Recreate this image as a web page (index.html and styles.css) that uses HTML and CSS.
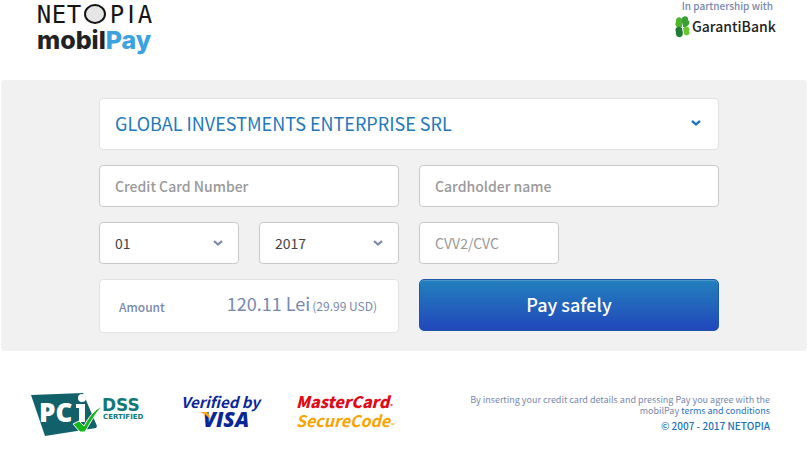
FILE: index.html
```html
<!DOCTYPE html>
<html lang="en">
<head>
<meta charset="utf-8">
<meta name="viewport" content="width=device-width, initial-scale=1">
<title>mobilPay - Pay safely</title>
<link rel="stylesheet" href="styles.css">
</head>
<body>
<header class="header">
  <svg class="brand" width="124" height="60" viewBox="0 0 124 60" role="img" aria-label="NETOPIA mobilPay">
    <ellipse cx="60" cy="14" rx="10" ry="9" fill="#e6e6e6" stroke="#151515" stroke-width="2"/>
    <g class="brand-top">
      <text x="9" y="23">N</text>
      <text x="24" y="23">E</text>
      <text x="39" y="23">T</text>
      <text x="82" y="23">P</text>
      <text class="brand-stem" x="96" y="23">I</text>
      <text x="110" y="23">A</text>
    </g>
    <text class="brand-name" x="2" y="49">mobil<tspan class="brand-pay">Pay</tspan></text>
  </svg>
  <div class="partner">
    <span class="partner-label">In partnership with</span>
    <svg width="102" height="30" viewBox="0 0 102 30" role="img" aria-label="GarantiBank">
      <path d="M8 16C3 18 0 14 2 11C1 6 8 4 8 10Z" fill="#4fb52f"/>
      <path d="M9 16C9 12 6 9 8 7C10 4 15 5 14 9C18 12 13 17 9 16Z" fill="#3aa035"/>
      <path d="M8 17C4 14 0 17 2 21C1 25 5 28 8 25C10 22 8 20 8 17Z" fill="#217a35"/>
      <path d="M9 17C13 14 17 17 15 20C17 24 12 26 10 23Z" fill="#6cc62f"/>
      <text class="bank-name" x="18" y="21">GarantiBank</text>
    </svg>
  </div>
</header>
<main class="panel">
  <form class="form" onsubmit="return false">
    <button class="merchant" type="button">
      <span>GLOBAL INVESTMENTS ENTERPRISE SRL</span>
      <svg width="12" height="8" viewBox="0 0 12 8" aria-hidden="true"><path d="M2 2L6 5.5L10 2" fill="none" stroke="#2478b9" stroke-width="2.4"/></svg>
    </button>
    <input class="field half" type="text" aria-label="Credit Card Number" placeholder="Credit Card Number">
    <input class="field half" type="text" aria-label="Cardholder name" placeholder="Cardholder name">
    <div class="select">
      <select class="field" aria-label="Expiry month"><option>01</option></select>
      <svg class="chevron" width="10" height="8" viewBox="0 0 10 8" aria-hidden="true"><path d="M1 2L5 5.5L9 2" fill="none" stroke="#7889ae" stroke-width="2.2"/></svg>
    </div>
    <div class="select">
      <select class="field" aria-label="Expiry year"><option>2017</option></select>
      <svg class="chevron" width="10" height="8" viewBox="0 0 10 8" aria-hidden="true"><path d="M1 2L5 5.5L9 2" fill="none" stroke="#7889ae" stroke-width="2.2"/></svg>
    </div>
    <input class="field code" type="text" aria-label="CVV2/CVC" placeholder="CVV2/CVC">
    <div class="amount half">
      <span class="amount-label">Amount</span>
      <span class="amount-value">120.11 Lei <small class="amount-usd">(29.99 USD)</small></span>
    </div>
    <button class="pay half" type="submit">Pay safely</button>
  </form>
</main>
<footer class="footer">
  <div class="badges">
    <svg width="116" height="46" viewBox="0 0 116 46" role="img" aria-label="PCI DSS Certified">
      <path d="M1 3L53 1L67 34L66 36L15 44Z" fill="#12616a"/>
      <text class="pci" x="9" y="30">PC</text>
      <path d="M46 12H55V30H49V16H46Z" fill="#fff"/>
      <circle cx="52" cy="6" r="4" fill="#fff"/>
      <path d="M43 32L49 29L54 34C58 26 64 18 72 14C65 22 60 31 55 40H50Z" fill="#12b81c" stroke="#fff" stroke-width="1"/>
      <text class="dss" x="72" y="19">DSS</text>
      <text class="certified" x="73" y="27">CERTIFIED</text>
    </svg>
    <svg width="84" height="46" viewBox="0 0 84 46" role="img" aria-label="Verified by VISA">
      <text class="verified" x="2" y="16">Verified by</text>
      <text class="visa" x="24" y="35">VISA</text>
      <path d="M20 20H28Q31 22 31 28Q27 21 20 20Z" fill="#f6a51b"/>
    </svg>
    <svg width="104" height="46" viewBox="0 0 104 46" role="img" aria-label="MasterCard SecureCode">
      <text class="mastercard" x="0" y="16">MasterCard<tspan class="mark">®</tspan></text>
      <text class="securecode" x="0" y="35">SecureCode<tspan class="mark">™</tspan></text>
    </svg>
  </div>
  <div class="legal">
    <p class="terms">By inserting your credit card details and pressing Pay you agree with the mobilPay <a href="#">terms and conditions</a></p>
    <p class="copyright"><a href="#">© 2007 - 2017 NETOPIA</a></p>
  </div>
</footer>
</body>
</html>
```
FILE: styles.css
```css
* { box-sizing: border-box; }

body {
  margin: 0;
  background: #fff;
  color: #7889ae;
  font-family: "Noto Sans CJK SC", "Open Sans", sans-serif;
  font-size: 14px;
}

button, input, select { font: inherit; }
svg { display: block; }
p { margin: 0; }
a { color: #1b72b8; text-decoration: none; }

.header {
  display: flex;
  justify-content: space-between;
  align-items: flex-start;
  height: 80px;
  padding: 0 32px 0 35px;
}

.brand-top {
  font: 24px "DejaVu Sans Mono", monospace;
  fill: #151515;
  text-anchor: middle;
}
.brand-stem { font-family: "DejaVu Sans", sans-serif; }
.brand-name { font: 800 25px Inter, sans-serif; fill: #222; }
.brand-pay { fill: #3da2e0; }

.partner { display: flex; flex-direction: column; align-items: flex-end; }
.partner-label {
  padding-right: 3px;
  font-size: 10px;
  font-weight: 500;
  line-height: 11px;
  color: #7889ae;
}
.bank-name {
  font: 500 14px "Noto Sans CJK SC", "Open Sans", sans-serif;
  fill: #222;
}

.panel {
  margin: 0 1px;
  padding: 18px 88px 18px 98px;
  background: #f1f1f1;
  border-radius: 4px;
}

.form {
  display: grid;
  grid-template-columns: repeat(4, 1fr);
  gap: 15px 20px;
  align-items: start;
}

.half { grid-column: span 2; }

.merchant {
  grid-column: 1 / -1;
  display: flex;
  justify-content: space-between;
  align-items: center;
  height: 52px;
  padding: 0 16px 2px 15px;
  border: 1px solid #e2e2e2;
  border-radius: 4px;
  background: #fff;
  color: #2478b9;
  font-size: 18px;
}

.field {
  width: 100%;
  height: 42px;
  padding: 0 15px;
  border: 1px solid #c9c9c9;
  border-radius: 4px;
  background: #fff;
  color: #444;
  appearance: none;
}
.field::placeholder { color: #999; font-weight: 500; opacity: 1; }
.code::placeholder { font-weight: 400; }

.select { position: relative; }
.select .field { display: block; }
.chevron { position: absolute; right: 16px; top: 17px; pointer-events: none; }

.amount {
  display: flex;
  justify-content: space-between;
  align-items: center;
  height: 54px;
  padding: 0 21px 0 19px;
  border: 1px solid #e2e2e2;
  border-radius: 4px;
  background: #fff;
}
.amount-label { font-size: 12px; font-weight: 500; }
.amount-value { padding-bottom: 6px; font-size: 18px; }
.amount-usd { margin-left: -2px; font-size: 12px; }

.pay {
  height: 52px;
  padding: 0 0 2px;
  border: 1px solid #1d57a8;
  border-radius: 5px;
  background: linear-gradient(#2380bd, #2148bb);
  box-shadow: inset 0 1px 0 #4c96ca;
  color: #fff;
  font-size: 18px;
  font-weight: 500;
}

.footer {
  display: flex;
  justify-content: space-between;
  align-items: flex-start;
  padding: 41px 38px 16px 30px;
}
.badges { display: flex; gap: 33px; }

.pci { font: 800 26px "Open Sans", sans-serif; fill: #fff; }
.dss { font: 700 17px "DejaVu Sans", sans-serif; fill: #12787a; }
.certified { font: 700 7px "DejaVu Sans", sans-serif; fill: #12787a; }
.verified { font: italic 700 15px "Noto Sans CJK SC", sans-serif; fill: #0b2797; }
.visa { font: italic 800 21px "Open Sans", sans-serif; fill: #0b2797; }
.mastercard { font: italic 900 16px "Noto Sans CJK SC", sans-serif; fill: #df0b17; }
.securecode { font: italic 700 16px "Noto Sans CJK SC", sans-serif; fill: #f7a400; }
.mark { font-size: 5px; }

.legal {
  max-width: 300px;
  text-align: right;
  font-size: 9px;
  line-height: 11px;
}
.terms { padding-top: 2px; }
.copyright { margin-top: 3px; font-size: 10px; font-weight: 500; line-height: 14px; }
```
